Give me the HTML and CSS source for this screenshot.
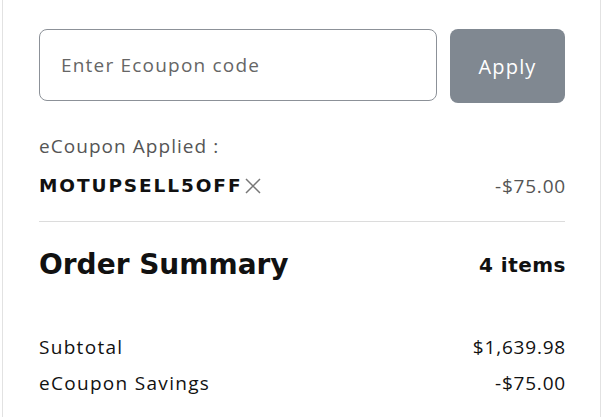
FILE: index.html
```html
<!DOCTYPE html>
<html lang="en">
<head>
    <meta charset="UTF-8">
    <meta name="viewport" content="width=device-width, initial-scale=1.0">
    <title>Cart Summary</title>
    <link rel="stylesheet" href="styles.css">
</head>
<body>
    <div class="panel">
        <div class="coupon-form">
            <input type="text" class="coupon-input" placeholder="Enter Ecoupon code">
            <button class="apply-btn">Apply</button>
        </div>
        <div class="coupon-applied">
            <div class="coupon-label">eCoupon Applied :</div>
            <div class="coupon-row">
                <span class="coupon-code">MOTUPSELL5OFF
                    <button class="remove-btn" title="Remove">
                        <svg width="18" height="18" viewBox="0 0 18 18"><path d="M2 2 L16 16 M16 2 L2 16" stroke="#777" stroke-width="1.5" fill="none"/></svg>
                    </button>
                </span>
                <span class="amount muted">-$75.00</span>
            </div>
        </div>
        <div class="summary-head">
            <h2>Order Summary</h2>
            <span class="item-count">4 items</span>
        </div>
        <div class="summary-lines">
            <div class="line"><span>Subtotal</span><span class="amount">$1,639.98</span></div>
            <div class="line"><span>eCoupon Savings</span><span class="amount">-$75.00</span></div>
        </div>
    </div>
</body>
</html>
```

FILE: styles.css
```css
body {
    margin: 0;
    background: #fff;
    font-family: 'Open Sans', 'Liberation Sans', sans-serif;
    color: #111;
}
.panel {
    margin-left: 2px;
    width: 599px;
    min-height: 417px;
    border-left: 1px solid #e2e2e2;
    border-right: 1px solid #e2e2e2;
    padding: 29px 35px 0 36px;
    box-sizing: border-box;
}
.coupon-form {
    display: flex;
    gap: 13px;
    align-items: flex-start;
}
.coupon-input {
    flex: 1;
    height: 72px;
    box-sizing: border-box;
    border: 1px solid #8c9198;
    border-radius: 8px;
    padding: 0 21px;
    font-family: inherit;
    font-size: 19px;
    letter-spacing: 1.2px;
    color: #333;
    outline: none;
}
.coupon-input::placeholder {
    color: #666;
}
.apply-btn {
    width: 115px;
    height: 74px;
    border: none;
    border-radius: 8px;
    background: #808891;
    color: #fff;
    font-family: inherit;
    font-size: 20px;
    letter-spacing: 1.2px;
    cursor: pointer;
}
.coupon-applied {
    padding: 30px 0 22px;
    border-bottom: 1px solid #dcdcdc;
}
.coupon-label {
    font-size: 19px;
    letter-spacing: 1.05px;
    color: #555;
    line-height: 26px;
}
.coupon-row {
    display: flex;
    justify-content: space-between;
    align-items: center;
    margin-top: 14px;
}
.coupon-code {
    display: flex;
    align-items: center;
    font-family: 'DejaVu Sans', sans-serif;
    font-size: 18.5px;
    font-weight: 700;
    letter-spacing: 1.9px;
    line-height: 26px;
}
.remove-btn {
    background: none;
    border: none;
    padding: 0;
    margin-left: 2px;
    display: flex;
    cursor: pointer;
}
.amount {
    font-size: 19px;
    letter-spacing: 0.8px;
    margin-right: -1px;
}
.muted {
    color: #555;
}
.summary-head {
    display: flex;
    justify-content: space-between;
    align-items: center;
    padding-top: 23px;
    font-family: 'DejaVu Sans', sans-serif;
}
.summary-head h2 {
    margin: 0;
    font-size: 28px;
    font-weight: 700;
    line-height: 40px;
}
.item-count {
    font-size: 20px;
    font-weight: 700;
    letter-spacing: 0.5px;
    margin-right: -1px;
}
.summary-lines {
    margin-top: 44px;
}
.line {
    display: flex;
    justify-content: space-between;
    font-size: 19px;
    letter-spacing: 1.3px;
    line-height: 36px;
}
```
